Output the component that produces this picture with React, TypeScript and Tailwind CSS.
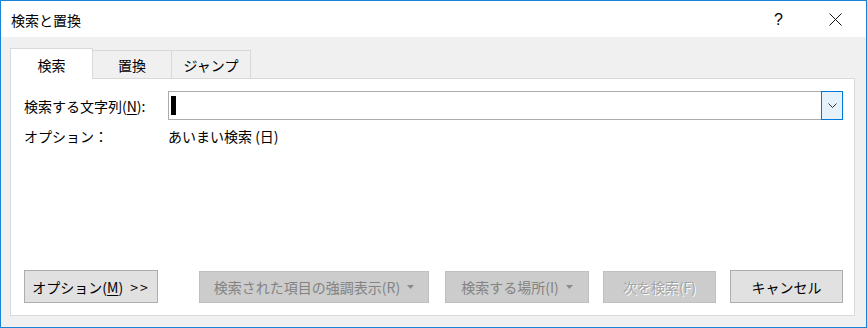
import React from "react";

const font = { fontFamily: '"Noto Sans CJK JP", "Noto Sans", sans-serif' };

function Tri() {
  return (
    <svg width="7" height="4" viewBox="0 0 7 4" className="ml-[7px]">
      <path d="M0 0 L7 0 L3.5 4 Z" fill="#8c8c8c" />
    </svg>
  );
}

export default function App() {
  return (
    <div
      className="w-[867px] h-[328px] border border-[#1883d7] flex flex-col bg-[#f0f0f0] text-black text-[14px] overflow-hidden"
      style={font}
    >
      {/* title bar */}
      <div className="h-[36px] bg-white flex items-center shrink-0">
        <div className="pl-[10px] leading-[20px] mt-[2px]">検索と置換</div>
        <div className="ml-auto flex items-center">
          <div className="text-[16px] leading-[20px] mr-[46px] mt-[2px]" style={{ fontFamily: '"Liberation Sans", sans-serif' }}>?</div>
          <svg width="13" height="13" viewBox="0 0 13 13" className="mr-[24px] mt-[1px]">
            <path d="M0.5 0.5 L12.5 12.5 M12.5 0.5 L0.5 12.5" stroke="#111" strokeWidth="1" />
          </svg>
        </div>
      </div>

      {/* body */}
      <div className="flex-1 flex flex-col pl-[9px] pr-[11px] pt-[11px] pb-[11px]">
        {/* tabs */}
        <div className="flex items-end h-[30px] shrink-0">
          <div className="w-[83px] h-[31px] -mb-px bg-white border border-b-0 border-[#d9d9d9] flex items-center justify-center relative z-10">
            <span className="leading-[20px] mt-[1px]">検索</span>
          </div>
          <div className="w-[79px] h-[28px] border border-l-0 border-b-0 border-[#d9d9d9] flex items-center justify-center">
            <span className="leading-[20px]">置換</span>
          </div>
          <div className="w-[79px] h-[28px] border border-l-0 border-b-0 border-[#d9d9d9] flex items-center justify-center">
            <span className="leading-[20px]">ジャンプ</span>
          </div>
        </div>

        {/* panel */}
        <div className="flex-1 bg-white border border-[#d9d9d9] flex flex-col">
          <div className="flex items-center mt-[12px] pl-[13px] pr-[11px]">
            <div className="w-[144px] leading-[20px]">
              検索する文字列(<span className="underline underline-offset-2">N</span>):
            </div>
            <div className="flex-1 h-[29px] border border-[#ababab] flex items-stretch">
              <div className="flex-1 flex items-center pl-[2px]">
                <div className="w-[5px] h-[19px] bg-black" />
              </div>
              <div className="w-[22px] -my-px -mr-px border border-[#0078d7] bg-[#e5f1fb] flex items-center justify-center">
                <svg width="9" height="5" viewBox="0 0 9 5">
                  <path d="M0.5 0.5 L4.5 4.5 L8.5 0.5" stroke="#333" strokeWidth="1" fill="none" />
                </svg>
              </div>
            </div>
          </div>

          <div className="flex items-center mt-[6px] pl-[13px]">
            <div className="w-[144px] leading-[20px]">オプション：</div>
            <div className="leading-[20px]">あいまい検索 (日)</div>
          </div>

          <div className="mt-auto flex items-center pl-[13px] pb-[12px]">
            <div className="w-[134px] h-[33px] border border-[#adadad] bg-[#e1e1e1] flex items-center justify-center">
              <span className="leading-[20px]">
                オプション(<span className="underline underline-offset-2">M</span>)
              </span>
              <span className="leading-[20px] ml-[7px] tracking-[2px]">&gt;&gt;</span>
            </div>
            <div className="ml-[41px] w-[230px] h-[32px] border border-[#bfbfbf] bg-[#cccccc] flex items-center justify-center text-[#838383]">
              <span className="leading-[20px]">検索された項目の強調表示(R)</span>
              <Tri />
            </div>
            <div className="ml-[16px] w-[144px] h-[32px] border border-[#bfbfbf] bg-[#cccccc] flex items-center justify-center text-[#838383]">
              <span className="leading-[20px]">検索する場所(I)</span>
              <Tri />
            </div>
            <div className="ml-[14px] w-[113px] h-[32px] border border-[#bfbfbf] bg-[#cccccc] flex items-center justify-center text-[#a3a3a3]">
              <span className="leading-[20px] [text-shadow:1px_1px_0_#ffffff]">次を検索(F)</span>
            </div>
            <div className="ml-[14px] w-[113px] h-[33px] border border-[#adadad] bg-[#e1e1e1] flex items-center justify-center">
              <span className="leading-[20px]">キャンセル</span>
            </div>
          </div>
        </div>
      </div>
    </div>
  );
}
